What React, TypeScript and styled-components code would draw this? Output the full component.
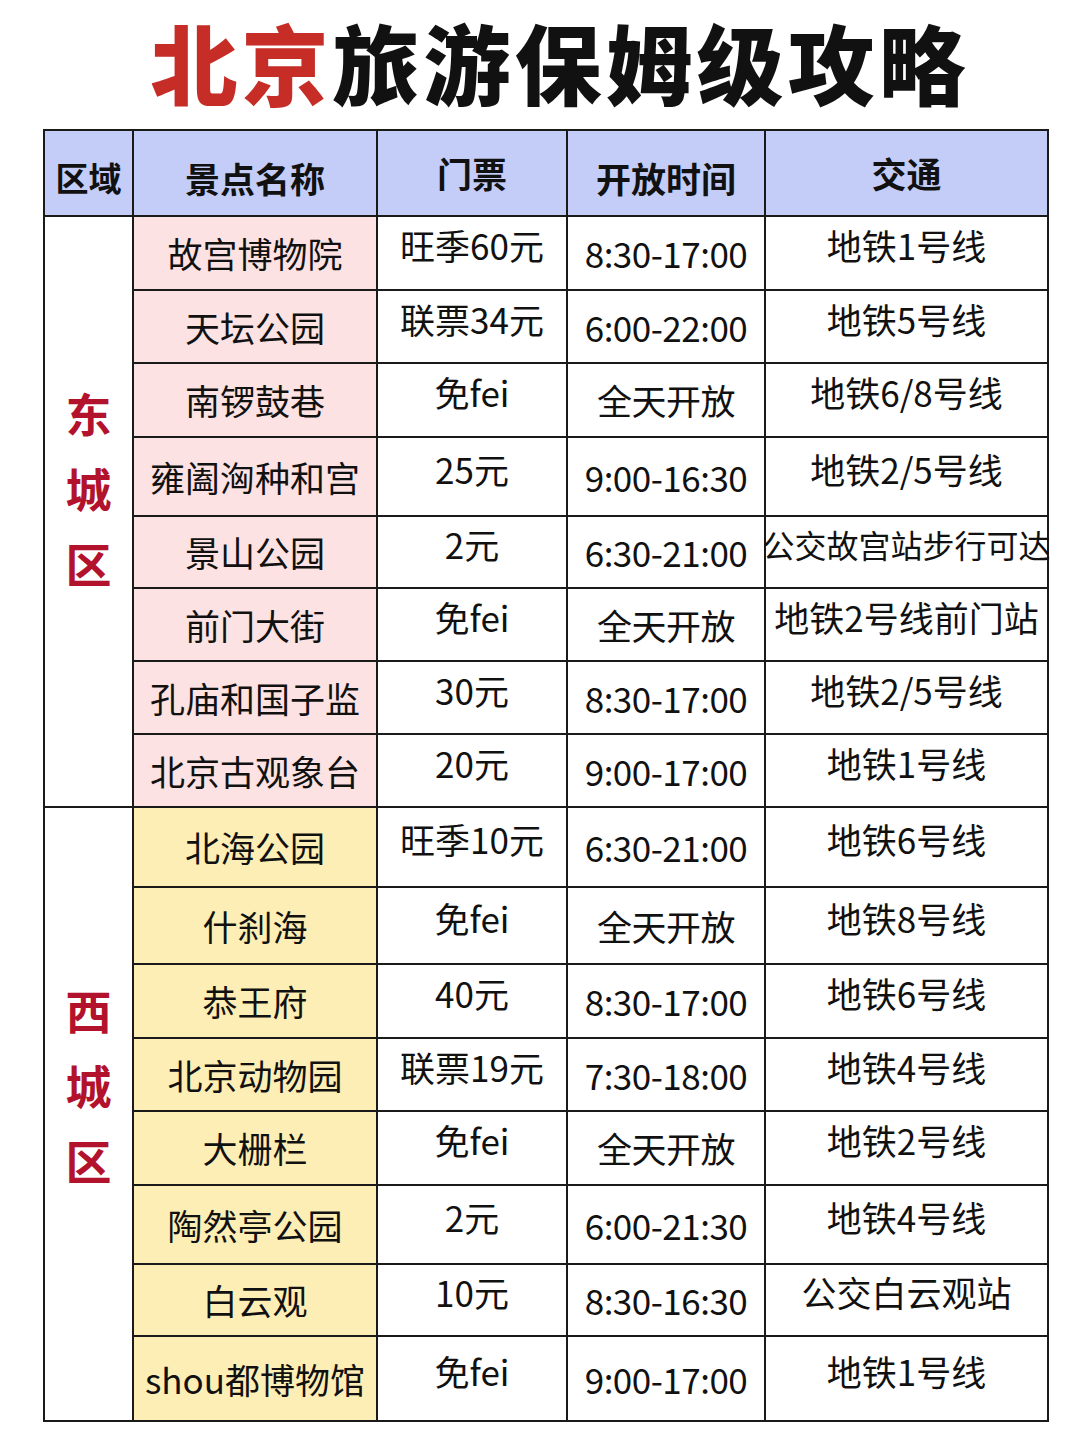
import styled, { createGlobalStyle } from 'styled-components'

const GlobalStyle = createGlobalStyle`
  html, body {
    margin: 0;
    padding: 0;
    background: #ffffff;
  }
  body {
    font-family: "Noto Sans CJK SC", "Noto Sans", sans-serif;
    color: #111111;
  }
`

interface Spot {
  name: string
  ticket: string
  hours: string
  transit: string
  h: number
}

interface District {
  label: string
  tone: 'pink' | 'yellow'
  spots: Spot[]
}

const districts: District[] = [
  {
    label: '东城区',
    tone: 'pink',
    spots: [
      { name: '故宫博物院', ticket: '旺季60元', hours: '8:30-17:00', transit: '地铁1号线', h: 74 },
      { name: '天坛公园', ticket: '联票34元', hours: '6:00-22:00', transit: '地铁5号线', h: 73 },
      { name: '南锣鼓巷', ticket: '免fei', hours: '全天开放', transit: '地铁6/8号线', h: 74 },
      { name: '雍阖洶种和宫', ticket: '25元', hours: '9:00-16:30', transit: '地铁2/5号线', h: 79 },
      { name: '景山公园', ticket: '2元', hours: '6:30-21:00', transit: '公交故宫站步行可达', h: 72 },
      { name: '前门大街', ticket: '免fei', hours: '全天开放', transit: '地铁2号线前门站', h: 73 },
      { name: '孔庙和国子监', ticket: '30元', hours: '8:30-17:00', transit: '地铁2/5号线', h: 73 },
      { name: '北京古观象台', ticket: '20元', hours: '9:00-17:00', transit: '地铁1号线', h: 73 },
    ],
  },
  {
    label: '西城区',
    tone: 'yellow',
    spots: [
      { name: '北海公园', ticket: '旺季10元', hours: '6:30-21:00', transit: '地铁6号线', h: 80 },
      { name: '什刹海', ticket: '免fei', hours: '全天开放', transit: '地铁8号线', h: 77 },
      { name: '恭王府', ticket: '40元', hours: '8:30-17:00', transit: '地铁6号线', h: 74 },
      { name: '北京动物园', ticket: '联票19元', hours: '7:30-18:00', transit: '地铁4号线', h: 73 },
      { name: '大栅栏', ticket: '免fei', hours: '全天开放', transit: '地铁2号线', h: 74 },
      { name: '陶然亭公园', ticket: '2元', hours: '6:00-21:30', transit: '地铁4号线', h: 79 },
      { name: '白云观', ticket: '10元', hours: '8:30-16:30', transit: '公交白云观站', h: 72 },
      { name: 'shou都博物馆', ticket: '免fei', hours: '9:00-17:00', transit: '地铁1号线', h: 85 },
    ],
  },
]

const Page = styled.div`
  width: 1080px;
  min-height: 1440px;
  background: #ffffff;
`

const Title = styled.h1`
  margin: 0;
  padding: 8px 0 8px 40px;
  height: 129px;
  box-sizing: border-box;
  text-align: center;
  font-family: "Noto Sans CJK SC", sans-serif;
  font-size: 87px;
  font-weight: 900;
  letter-spacing: 4px;
  line-height: 107px;
  color: #111111;
`

const Red = styled.span`
  color: #c62d26;
`

const Table = styled.div`
  margin-left: 43px;
  width: 1006px;
  box-sizing: border-box;
  display: grid;
  grid-template-columns: 89px 244px 190px 198px 283px;
  border-top: 2px solid #1a1a1a;
  border-left: 2px solid #1a1a1a;
`

const CellBase = styled.div`
  box-sizing: border-box;
  border-right: 2px solid #1a1a1a;
  border-bottom: 2px solid #1a1a1a;
  display: flex;
  align-items: center;
  justify-content: center;
  white-space: nowrap;
  line-height: 1.2;
`

const HeadCell = styled(CellBase)<{ $raise?: boolean; $narrow?: boolean }>`
  height: 86px;
  background: #c4cdf8;
  font-size: ${p => (p.$narrow ? 33 : 35)}px;
  font-weight: 700;
  padding-top: ${p => (p.$raise ? 0 : 10)}px;
`

const RegionCell = styled(CellBase)<{ $span: number; $lift: number }>`
  grid-column: 1;
  grid-row: span ${p => p.$span};
  flex-direction: column;
  padding-bottom: ${p => p.$lift}px;
  color: #b3122d;
  font-size: 46px;
  font-weight: 700;
`

const RegionChar = styled.span`
  display: block;
  height: 75px;
  line-height: 75px;
`

const NameCell = styled(CellBase)<{ $tone: 'pink' | 'yellow'; $h: number }>`
  height: ${p => p.$h}px;
  background: ${p => (p.$tone === 'pink' ? '#fce2e2' : '#fdeeb5')};
  font-size: 35px;
`

const DataCell = styled(CellBase)<{ $raise?: boolean; $small?: boolean }>`
  font-size: ${p => (p.$small ? 32 : 35)}px;
  padding-bottom: ${p => (p.$raise ? 16 : 0)}px;
  overflow: visible;
`

const Hours = styled.span`
  letter-spacing: -0.5px;
`

export default function App() {
  return (
    <Page>
      <GlobalStyle />
      <Title>
        <Red>北京</Red>旅游保姆级攻略
      </Title>
      <Table>
        <HeadCell $narrow>区域</HeadCell>
        <HeadCell>景点名称</HeadCell>
        <HeadCell $raise>门票</HeadCell>
        <HeadCell>开放时间</HeadCell>
        <HeadCell $raise>交通</HeadCell>
        {districts.map((d, di) =>
          d.spots.map((s, i) => (
            <>
              {i === 0 && (
                <RegionCell key={d.label} $span={d.spots.length} $lift={di === 0 ? 48 : 60}>
                  {d.label.split('').map(c => (
                    <RegionChar key={c}>{c}</RegionChar>
                  ))}
                </RegionCell>
              )}
              <NameCell key={s.name} $tone={d.tone} $h={s.h}>
                {s.name}
              </NameCell>
              <DataCell $raise>{s.ticket}</DataCell>
              <DataCell>
                <Hours>{s.hours}</Hours>
              </DataCell>
              <DataCell $raise $small={s.transit.length > 8}>
                {s.transit}
              </DataCell>
            </>
          ))
        )}
      </Table>
    </Page>
  )
}
